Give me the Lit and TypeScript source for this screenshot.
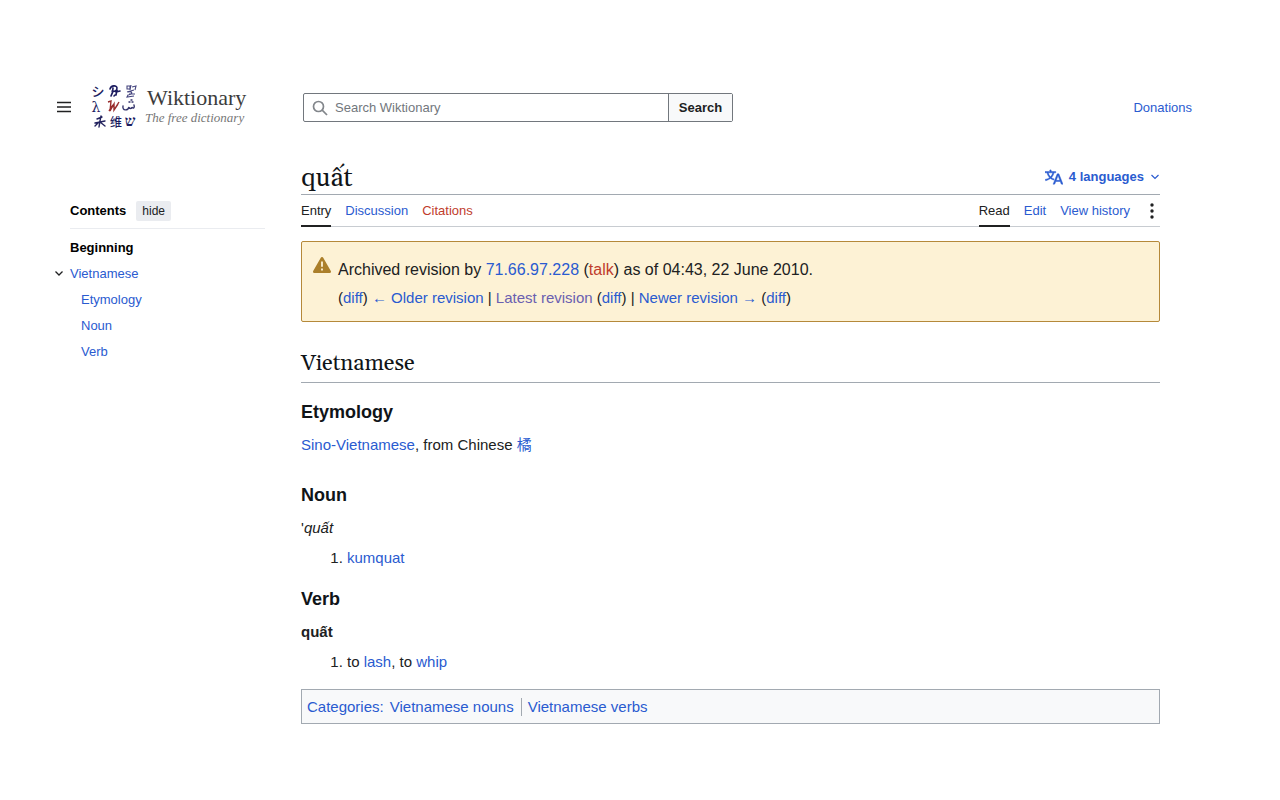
import { LitElement, html, css, svg } from "lit";
import { customElement, state } from "lit/decorators.js";

@customElement("wiki-logo")
class WikiLogo extends LitElement {
  static styles = css`
    :host { display: block; }
    .logo { display: flex; align-items: center; gap: 8px; color: #444; text-decoration: none; }
    .mark { width: 46px; height: 46px; flex: none; overflow: visible; }
    .words { display: flex; flex-direction: column; font-family: "Liberation Serif", serif; }
    .name { font-size: 22px; line-height: 22px; padding-left: 2px; color: #3c3c3c; }
    .tag { font-size: 13px; line-height: 18px; font-style: italic; color: #777; }
    .cjk { font-family: "Noto Sans CJK SC", sans-serif; font-weight: 500; }
    .serif { font-family: "DejaVu Serif", serif; }
    .hebrew { font-family: "Liberation Serif", serif; font-weight: bold; }
  `;
  render() {
    return html`<a class="logo" href="#" aria-label="Wiktionary, The free dictionary">
      <svg class="mark" viewBox="0 0 46 46" fill="#1c1c60" text-anchor="middle" aria-hidden="true">
        ${svg`
        <text class="cjk" x="7" y="12" font-size="13">シ</text>
        <path d="M19 5c1-4 7-4 7-1s-3 4-5 3M22 4c0 3 0 5-2 8M26 6l-1 5M25 8l4-1M23 12l1-1" fill="none" stroke="#1c1c60" stroke-width="1.6" stroke-linecap="round"/>
        <path d="M36 2h3v3h-3zM40 1l-1 5M41 3l4-1-1 4M36 8l7-2M37 8c5-1 5 2 0 3l-1 2 7-1M38 10h6" fill="none" stroke="#45457f" stroke-width="1.100"/>
        <text class="serif" x="5" y="28" font-size="14">λ</text>
        <path d="M17 18l3-1-1 10 4-7v6l5-8M18 27l4-6M23 26l4-6" fill="none" stroke="#982c2c" stroke-width="1.400"/>
        <path d="M32 22c-1 5 5 5 6 1 0 2 3 2 3 0 1 2 3 1 2-2M38 18h1M41 18h1M40 16h1" fill="none" stroke="#34346c" stroke-width="1.4" stroke-linecap="round"/>
        <path d="M6 35l5-2M10 32l-1 5-1 6M4 39l10-2M8 38l-4 4M9 38l5 4" fill="none" stroke="#24245f" stroke-width="1.4" stroke-linecap="round"/>
        <text class="cjk" x="25" y="43" font-size="12">维</text>
        <text class="hebrew" x="39" y="42" font-size="15">ש</text>`}
      </svg>
      <span class="words"><span class="name">Wiktionary</span><span class="tag">The free dictionary</span></span>
    </a>`;
  }
}

@customElement("app-root")
class AppRoot extends LitElement {
  static styles = css`
    :host { display: block; min-height: 100vh; box-sizing: border-box; padding: 84px 88px 76px 55px; background: #fff; color: #202122; font-family: "Liberation Sans", Arial, sans-serif; font-size: 16px; line-height: 26px; }
    * { box-sizing: border-box; }
    a { color: #2a5bd0; text-decoration: none; }
    a:hover { text-decoration: underline; }
    button { font: inherit; color: inherit; border: 0; background: none; padding: 0; cursor: pointer; }
    h1, h2, h3, p, ol, ul { margin: 0; padding: 0; font-weight: normal; }
    .header, .body { display: grid; grid-template-columns: 210px minmax(0, 1fr); column-gap: 36px; }
    .header { align-items: start; font-size: 13px; }
    .brand { display: flex; align-items: center; gap: 18px; height: 46px; }
    .menu { display: flex; width: 18px; height: 18px; align-items: center; justify-content: center; }
    .bar { display: flex; align-items: center; justify-content: space-between; height: 47px; padding-left: 2px; }
    .search { display: flex; width: 430px; height: 29px; border: 1px solid #72777d; border-radius: 2px; }
    .field { display: flex; align-items: center; flex: 1; gap: 7px; padding-left: 8px; }
    .input { flex: 1; min-width: 0; border: 0; outline: 0; padding: 0; font: inherit; background: none; }
    .input::placeholder { color: #72777d; opacity: 1; }
    .go { width: 64px; border-left: 1px solid #72777d; background: #f8f9fa; font-weight: bold; }
    .body { padding-top: 29px; padding-right: 32px; }
    .toc { padding-top: 38px; font-size: 13px; color: #000; }
    .tochead { display: flex; align-items: center; gap: 10px; height: 31px; margin-left: 15px; padding-bottom: 4px; border-bottom: 1px solid #eaecf0; font-weight: bold; }
    .hide { height: 20px; padding: 0 6px; border-radius: 2px; background: #eaecf0; color: #202122; font-size: 12px; line-height: 20px; font-weight: normal; }
    .toclist { padding-top: 6px; }
    .toclist, .sub { list-style: none; }
    .row { display: flex; align-items: center; height: 26px; }
    .toggle { display: flex; width: 15px; }
    .l1 { padding-left: 15px; font-weight: bold; }
    .l1 a { color: #000; }
    .l2 { padding-left: 26px; }
    .titlebar { display: flex; justify-content: space-between; align-items: center; height: 35px; border-bottom: 1px solid #a2a9b1; }
    h1, h2 { font-family: "Gelasio", Georgia, "Liberation Serif", serif; color: #101418; }
    h1 { font-size: 26px; line-height: 32px; padding-top: 4px; }
    .langs { display: flex; align-items: center; gap: 6px; color: #2a5bd0; font-size: 13px; font-weight: bold; }
    .tabs { display: flex; justify-content: space-between; height: 32px; border-bottom: 1px solid #c8ccd1; font-size: 13px; }
    .group { display: flex; gap: 14px; }
    .tab { display: block; height: 32px; line-height: 31px; }
    .red { color: #bf3c2c; }
    .visited { color: #6a60b0; }
    .on { color: #202122; border-bottom: 2px solid #202122; }
    .more { display: flex; align-items: center; width: 16px; justify-content: center; }
    .notice { display: flex; gap: 7px; margin-top: 14px; padding: 14px 11px 9px; min-height: 81px; border: 1px solid #b5893a; border-radius: 2px; background: #fdf2d5; }
    .lead { font-size: 16px; line-height: 28px; }
    .nav { font-size: 15px; line-height: 28px; }
    .warn { flex: none; }
    h2 { margin-top: 24px; height: 37px; font-size: 22px; line-height: 36px; border-bottom: 1px solid #a2a9b1; }
    h3 { margin-top: 15px; font-size: 18px; line-height: 28px; font-weight: bold; color: #101418; }
    .text { font-size: 15px; margin-top: 6px; }
    .gap { margin-top: 23px; }
    .near { margin-top: 14px; }
    .defs { font-size: 15px; margin-top: 4px; padding-left: 46px; }
    .cats { display: flex; align-items: center; margin-top: 14px; height: 35px; padding: 0 5px; border: 1px solid #a2a9b1; background: #f8f9fa; font-size: 15px; gap: 6px; }
    .catlist { display: flex; list-style: none; line-height: 18px; }
    .catlist li + li { margin-left: 7px; padding-left: 6px; border-left: 1px solid #a2a9b1; }
    .han { font-family: "Liberation Sans", "Noto Sans CJK JP", sans-serif; }
  `;

  @state() private open = true;

  render() {
    return html`
      <header class="header">
        <div class="brand">
          <button class="menu" aria-label="Main menu"><svg width="16" height="12" viewBox="0 0 16 12" stroke="#202122" stroke-width="1.6"><path d="M1 1.5h14M1 6h14M1 10.5h14"/></svg></button>
          <wiki-logo></wiki-logo>
        </div>
        <div class="bar">
          <form class="search" role="search" @submit=${(e: Event) => e.preventDefault()}>
            <label class="field">
              <svg width="16" height="16" viewBox="0 0 16 16" fill="none" stroke="#82868b" stroke-width="1.7"><circle cx="6.5" cy="6.5" r="5"/><path d="M10.2 10.2l4.8 4.8"/></svg>
              <input class="input" type="search" placeholder="Search Wiktionary" aria-label="Search Wiktionary">
            </label>
            <button class="go">Search</button>
          </form>
          <a href="#">Donations</a>
        </div>
      </header>
      <div class="body">
        <nav class="toc" aria-label="Contents">
          <div class="tochead">Contents <button class="hide">hide</button></div>
          <ul class="toclist">
            <li class="row l1"><a href="#">Beginning</a></li>
            <li>
              <div class="row"><button class="toggle" aria-label="Toggle Vietnamese" @click=${() => (this.open = !this.open)}><svg width="8" height="8" viewBox="0 0 8 8" fill="none" stroke="#202122" stroke-width="1.3"><path d="M.5 1.5L4 5l3.500-3.500"/></svg></button><a href="#vi">Vietnamese</a></div>
              ${this.open ? html`<ul class="sub">${["Etymology", "Noun", "Verb"].map((t) => html`<li class="row l2"><a href="#${t}">${t}</a></li>`)}</ul>` : ""}
            </li>
          </ul>
        </nav>
        <main>
          <div class="titlebar">
            <h1>quất</h1>
            <button class="langs">
              <svg width="18" height="18" viewBox="0 0 20 20" fill="#2a5bd0" stroke="#2a5bd0" stroke-width=".5"><path d="M20 18h-1.440a.6.6 0 0 1-.4-.12.8.8 0 0 1-.23-.31L17 15h-5l-1 2.540a.8.8 0 0 1-.22.3.6.6 0 0 1-.4.14H9l4.550-11.470h1.890zm-3.530-4.310L14.890 9.500a12 12 0 0 1-.39-1.240q-.09.37-.19.690l-.19.560-1.580 4.190zm-6.300-1.580a13.400 13.400 0 0 1-2.910-1.410 11.460 11.460 0 0 0 2.810-5.370H12V4H7.310a4 4 0 0 0-.2-.560C6.870 2.790 6.600 2 6.600 2l-1.470.5s.4.890.6 1.500H0v1.330h2.150A11.230 11.230 0 0 0 5 10.700a17.200 17.200 0 0 1-5 2.100q.56.820.87 1.380a23.300 23.300 0 0 0 5.220-2.510 15.600 15.600 0 0 0 3.560 1.770zM3.630 5.330h4.910a8.100 8.100 0 0 1-2.450 4.450 9.100 9.100 0 0 1-2.460-4.450"/></svg>
              <span>4 languages</span>
              <svg width="10" height="8" viewBox="0 0 10 8" fill="none" stroke="#2a5bd0" stroke-width="1.2"><path d="M1.500 2L5 5.500 8.500 2"/></svg>
            </button>
          </div>
          <div class="tabs">
            <nav class="group"><a class="tab on" href="#">Entry</a><a class="tab" href="#">Discussion</a><a class="tab red" href="#">Citations</a></nav>
            <nav class="group"><a class="tab on" href="#">Read</a><a class="tab" href="#">Edit</a><a class="tab" href="#">View history</a>
              <button class="more" aria-label="More"><svg width="4" height="16" viewBox="0 0 4 16" fill="#202122"><circle cx="2" cy="2" r="1.7"/><circle cx="2" cy="8" r="1.700"/><circle cx="2" cy="14" r="1.700"/></svg></button></nav>
          </div>
          <section class="notice">
            <svg class="warn" width="18" height="18" viewBox="0 0 20 20" fill="#ab7f2a"><path d="M11.530 2.300A1.850 1.850 0 0 0 10 1.210 1.850 1.850 0 0 0 8.480 2.300L.36 16.360C-.48 17.810.21 19 1.880 19h16.240c1.670 0 2.360-1.190 1.520-2.640zM11 16H9v-2h2zm0-4H9V6h2z"/></svg>
            <div>
              <p class="lead">Archived revision by <a href="#">71.66.97.228</a> (<a class="red" href="#">talk</a>) as of 04:43, 22 June 2010.</p>
              <p class="nav">(<a href="#">diff</a>) <a href="#">← Older revision</a> | <a class="visited" href="#">Latest revision</a> (<a href="#">diff</a>) | <a href="#">Newer revision →</a> (<a href="#">diff</a>)</p>
            </div>
          </section>
          <h2 id="vi">Vietnamese</h2>
          <h3>Etymology</h3>
          <p class="text"><a href="#">Sino-Vietnamese</a>, from Chinese <a class="han" href="#" lang="zh">橘</a></p>
          <h3 class="gap">Noun</h3>
          <p class="text">'<i>quất</i></p>
          <ol class="defs"><li><a href="#">kumquat</a></li></ol>
          <h3 class="near">Verb</h3>
          <p class="text"><b>quất</b></p>
          <ol class="defs"><li>to <a href="#">lash</a>, to <a href="#">whip</a></li></ol>
          <div class="cats"><a href="#">Categories:</a>
            <ul class="catlist"><li><a href="#">Vietnamese nouns</a></li><li><a href="#">Vietnamese verbs</a></li></ul>
          </div>
        </main>
      </div>`;
  }
}
